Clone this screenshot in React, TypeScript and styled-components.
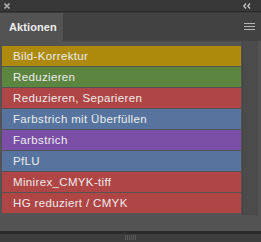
import styled, { createGlobalStyle } from 'styled-components';

const GlobalStyle = createGlobalStyle`
    html, body {
        margin: 0;
        padding: 0;
        background: #383838;
    }
`;

const Panel = styled.div`
    width: 261px;
    height: 242px;
    display: flex;
    flex-direction: column;
    font-family: 'Liberation Sans', Arial, sans-serif;
    background: #383838;
    overflow: hidden;
`;

const TopBar = styled.div`
    height: 11px;
    display: flex;
    align-items: center;
    justify-content: space-between;
    padding: 0 10px 0 4px;
    border-bottom: 1px solid #2a2a2a;
`;

const TabRow = styled.div`
    height: 28px;
    display: flex;
    background: #424242;
    border-top: 1px solid #3a3a3a;
`;

const Tab = styled.div`
    width: 63px;
    display: flex;
    align-items: center;
    padding-left: 9px;
    box-sizing: border-box;
    background: #535353;
    color: #eeeeee;
    font-size: 11px;
    font-weight: bold;
    letter-spacing: 0.1px;
`;

const TabSpacer = styled.div`
    flex: 1;
    display: flex;
    align-items: center;
    justify-content: flex-end;
    padding-right: 6px;
`;

const Body = styled.div`
    flex: 1;
    background: #535353;
    display: flex;
    padding: 5px 3px 0 2px;
    gap: 1px;
`;

const List = styled.div`
    width: 240px;
    display: flex;
    flex-direction: column;
    gap: 1px;
`;

const Row = styled.div<{ $color: string }>`
    height: 20px;
    display: flex;
    align-items: center;
    padding-left: 11px;
    background: ${(p) => p.$color};
    color: #ececec;
    font-size: 11.5px;
    letter-spacing: 0.35px;
    white-space: nowrap;
`;

const Scroll = styled.div`
    width: 15px;
    height: 173px;
    margin-top: -5px;
    background: #4b4b4b;
    border-left: 1px solid #444;
    border-bottom: 1px solid #464646;
`;

const BottomBar = styled.div`
    height: 7px;
    background: #3e3e3e;
    border-top: 3px solid #2c2c2c;
    display: flex;
    justify-content: center;
    padding-top: 1px;
`;

const Grip = styled.div`
    width: 12px;
    height: 5px;
    background: repeating-linear-gradient(90deg, #5a5a5a 0 1px, transparent 1px 2px);
`;

const actions = [
    { label: 'Bild-Korrektur', color: '#ae8a0c' },
    { label: 'Reduzieren', color: '#5c8540' },
    { label: 'Reduzieren, Separieren', color: '#b04545' },
    { label: 'Farbstrich mit Überfüllen', color: '#57749e' },
    { label: 'Farbstrich', color: '#7b4fa6' },
    { label: 'PfLU', color: '#57749e' },
    { label: 'Minirex_CMYK-tiff', color: '#b04545' },
    { label: 'HG reduziert / CMYK', color: '#b04545' },
];

export default function App() {
    return (
        <>
            <GlobalStyle />
            <Panel>
                <TopBar>
                    <svg width="6" height="6" viewBox="0 0 6 6">
                        <path d="M0.5 0.5 L5.5 5.5 M5.5 0.5 L0.5 5.5" stroke="#a8a8a8" strokeWidth="1.6" />
                    </svg>
                    <svg width="8" height="6" viewBox="0 0 8 6">
                        <path d="M3 0.5 L0.8 3 L3 5.5 M7 0.5 L4.8 3 L7 5.5" stroke="#c8c8c8" strokeWidth="1.3" fill="none" />
                    </svg>
                </TopBar>
                <TabRow>
                    <Tab>Aktionen</Tab>
                    <TabSpacer>
                        <svg width="11" height="8" viewBox="0 0 11 8">
                            <path d="M0 0.5 H11 M0 3.5 H11 M0 6.5 H11" stroke="#b4b4b4" strokeWidth="1" />
                        </svg>
                    </TabSpacer>
                </TabRow>
                <Body>
                    <List>
                        {actions.map((a) => (
                            <Row key={a.label} $color={a.color}>
                                {a.label}
                            </Row>
                        ))}
                    </List>
                    <Scroll />
                </Body>
                <BottomBar>
                    <Grip />
                </BottomBar>
            </Panel>
        </>
    );
}
